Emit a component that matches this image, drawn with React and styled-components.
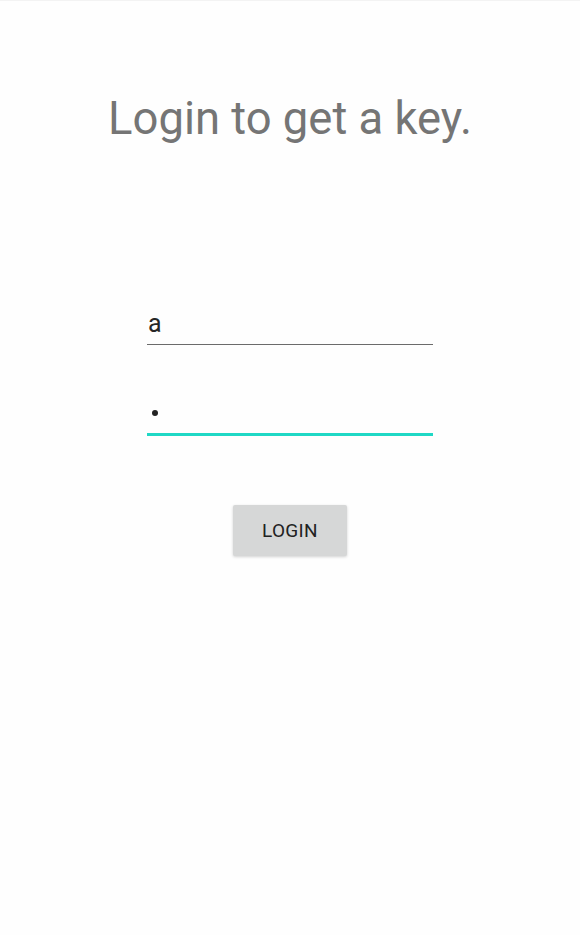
import React from "react";
import styled, { createGlobalStyle } from "styled-components";

const Global = createGlobalStyle`
  html, body { margin: 0; padding: 0; background: #fefefe; }
  body { font-family: Roboto, "Noto Sans", sans-serif; }
`;

const Screen = styled.div`
  width: 580px;
  height: 935px;
  background: #fefefe;
  border-top: 1px solid #f3f3f3;
  box-sizing: border-box;
  display: flex;
  flex-direction: column;
  align-items: center;
`;

const Title = styled.h1`
  margin: 86px 0 0 0;
  font-family: Roboto, sans-serif;
  font-weight: 400;
  font-size: 45.4px;
  line-height: 64px;
  color: #757575;
  letter-spacing: 0;
`;

const Form = styled.div`
  margin-top: 148px;
  width: 286px;
  display: flex;
  flex-direction: column;
  gap: 45px;
`;

const Field = styled.div`
  height: 46px;
  box-sizing: border-box;
  border-bottom: ${(p) => (p.$focused ? "3px solid #1fd8c5" : "1px solid #6b6b6b")};
  display: flex;
  align-items: flex-end;
  padding: 0 0 ${(p) => (p.$focused ? "8px" : "5px")} 1px;
  font-family: Roboto, sans-serif;
  font-size: 25px;
  color: #262626;
`;

const Value = styled.span`
  line-height: 30px;
`;

const Dot = styled.span`
  display: inline-block;
  width: 6px;
  height: 6px;
  border-radius: 50%;
  background: #222;
  margin: 0 0 9px 4px;
`;

const Button = styled.button`
  margin-top: 69px;
  width: 114px;
  height: 51px;
  border: none;
  border-radius: 2px;
  background: #d6d7d7;
  box-shadow: 0 1px 3px rgba(0, 0, 0, 0.18);
  font-family: Roboto, sans-serif;
  font-size: 19px;
  font-weight: 400;
  color: #222;
  letter-spacing: 0.3px;
  padding: 0;
`;

export default function App() {
  return (
    <>
      <Global />
      <Screen>
        <Title>Login to get a key.</Title>
        <Form>
          <Field>
            <Value>a</Value>
          </Field>
          <Field $focused>
            <Dot />
          </Field>
        </Form>
        <Button>LOGIN</Button>
      </Screen>
    </>
  );
}
